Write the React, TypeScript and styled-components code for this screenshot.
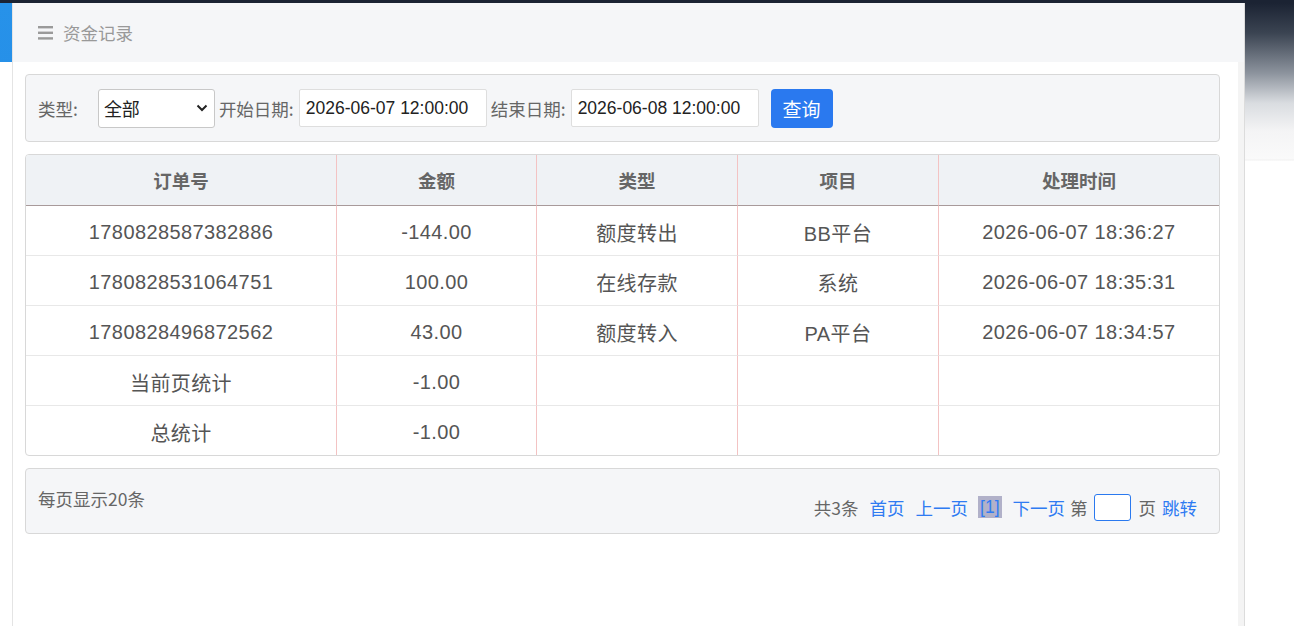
import React from 'react';
import styled, { createGlobalStyle } from 'styled-components';

const GlobalStyle = createGlobalStyle`
  html, body {
    margin: 0;
    padding: 0;
    background: #fff;
  }
  body {
    font-family: "Liberation Sans", "Noto Sans CJK SC", sans-serif;
  }
`;

const colors = {
  label: '#666',
  text: '#555',
  muted: '#999',
  panelBg: '#f5f6f8',
  boxBorder: '#d8d8d8',
  blue: '#2a79ef',
  pink: '#f3c3c3',
};

const Page = styled.div`
  display: grid;
  grid-template-columns: 12px 1233px 1fr;
  height: 626px;
  padding-top: 3px;
  box-sizing: border-box;
  background: linear-gradient(#1b2333, #1b2333) top / 100% 3px no-repeat, #fff;
`;

const LeftRail = styled.div`
  background: linear-gradient(#fff, #fff) 0 59px / 100% 100% no-repeat,
    linear-gradient(180deg, #2792e9, #1e7fe0);
`;

const Backdrop = styled.div`
  background: linear-gradient(
    180deg,
    #1b2333 0px,
    #3b4452 30px,
    #8c939d 70px,
    #d9dce0 100px,
    #f4f4f5 128px,
    #fafafa 156px,
    #f0f0f0 157px,
    #fff 158px
  );
`;

const Panel = styled.div`
  display: flex;
  flex-direction: column;
  border-left: 1px solid #e4e4e4;
  border-right: 1px solid #dcdcdc;
  background: #fff;
`;

const Header = styled.div`
  display: flex;
  align-items: center;
  gap: 9px;
  height: 59px;
  padding-left: 25px;
  background: ${colors.panelBg};
  color: ${colors.muted};
  font-size: 17.5px;
  font-family: "Noto Sans CJK SC", sans-serif;
`;

const Body = styled.div`
  flex: 1;
  padding: 12px 18px 0 12px;
  border-right: 6px solid #f4f4f4;
`;

const Box = styled.div`
  background: ${colors.panelBg};
  border: 1px solid ${colors.boxBorder};
  border-radius: 4px;
`;

const FilterBar = styled(Box)`
  display: flex;
  align-items: center;
  height: 66px;
  padding: 0 12px;
  font-size: 17.5px;
  color: ${colors.label};
`;

const Label = styled.span<{ $gap?: number }>`
  font-family: "Noto Sans CJK SC", sans-serif;
  font-size: 17.5px;
  margin: 0 ${(p) => p.$gap ?? 5}px 0 4px;
  &:first-child {
    margin-left: 0;
  }
`;

const Select = styled.div`
  display: flex;
  align-items: center;
  justify-content: space-between;
  box-sizing: border-box;
  width: 117px;
  height: 39px;
  padding: 0 6px 0 5px;
  background: #fff;
  border: 1px solid #c8c8c8;
  border-radius: 3px;
  color: #222;
  font-size: 18px;
  font-family: "Noto Sans CJK SC", sans-serif;
`;

const DateInput = styled.div`
  display: flex;
  align-items: center;
  box-sizing: border-box;
  width: 188px;
  height: 38px;
  padding-left: 6px;
  background: #fff;
  border: 1px solid #dedede;
  border-radius: 2px;
  color: #222;
  font-family: "Liberation Sans", Arial, sans-serif;
`;

const QueryButton = styled.button`
  margin-left: 12px;
  width: 62px;
  height: 39px;
  border: none;
  border-radius: 4px;
  background: ${colors.blue};
  color: #fff;
  font-size: 19px;
  font-family: "Noto Sans CJK SC", sans-serif;
  cursor: pointer;
`;

const TableWrap = styled.div`
  margin-top: 12px;
  border: 1px solid ${colors.boxBorder};
  border-radius: 4px;
  overflow: hidden;
`;

const Table = styled.table`
  width: 100%;
  border-collapse: separate;
  border-spacing: 0;
  table-layout: fixed;
  font-size: 20px;
  letter-spacing: 0.4px;
  color: ${colors.text};
`;

const Th = styled.th`
  height: 51px;
  box-sizing: border-box;
  padding: 0;
  background: #eff2f5;
  color: ${colors.label};
  font-size: 18.5px;
  font-weight: bold;
  letter-spacing: 0;
  font-family: "Noto Sans CJK SC", sans-serif;
  border-bottom: 1px solid #a89a9a;
  border-right: 1px solid ${colors.pink};
  &:last-child {
    border-right: none;
  }
`;

const Td = styled.td`
  height: 50px;
  padding: 3px 0 0;
  box-sizing: border-box;
  text-align: center;
  border-top: 1px solid #e8e8e8;
  border-right: 1px solid ${colors.pink};
  &:last-child {
    border-right: none;
  }
`;

const BodyRow = styled.tr`
  &:first-child td {
    border-top: none;
    height: 49px;
  }
`;

const Pager = styled(Box)`
  display: flex;
  justify-content: space-between;
  align-items: flex-start;
  margin-top: 12px;
  height: 64px;
  padding: 0 22px 0 12px;
  font-size: 17.5px;
  color: ${colors.label};
  font-family: "Noto Sans CJK SC", sans-serif;
`;

const PageSize = styled.span`
  margin-top: 17px;
`;

const PagerNav = styled.div`
  display: flex;
  align-items: center;
  margin-top: 25px;
  height: 26px;
`;

const PagerLink = styled.a<{ $ml?: number }>`
  color: #2f7bf2;
  text-decoration: none;
  margin-left: ${(p) => p.$ml ?? 11}px;
  cursor: pointer;
`;

const PagerText = styled.span<{ $ml?: number }>`
  margin-left: ${(p) => p.$ml ?? 0}px;
`;

const Current = styled.span`
  margin-left: 10px;
  padding: 0 2px;
  height: 22px;
  line-height: 22px;
  background: #b1b1c9;
  color: #2f7bf2;
  font-family: "Liberation Sans", sans-serif;
`;

const JumpInput = styled.div`
  box-sizing: border-box;
  width: 37px;
  height: 27px;
  margin: 0 8px 0 6px;
  background: #fff;
  border: 1px solid #2a79ef;
  border-radius: 3px;
`;

const MenuIcon = () => (
  <svg width="16" height="15" viewBox="0 0 16 15">
    <rect x="0" y="1" width="15" height="2.4" fill="#9a9a9a" />
    <rect x="0" y="6.6" width="15" height="2.4" fill="#9a9a9a" />
    <rect x="0" y="12.2" width="15" height="2.4" fill="#9a9a9a" />
  </svg>
);

const Chevron = () => (
  <svg width="12" height="8" viewBox="0 0 12 8">
    <path d="M1.5 1.5 L6 6 L10.5 1.5" fill="none" stroke="#222" strokeWidth="2" />
  </svg>
);

const rows = [
  ['1780828587382886', '-144.00', '额度转出', 'BB平台', '2026-06-07 18:36:27'],
  ['1780828531064751', '100.00', '在线存款', '系统', '2026-06-07 18:35:31'],
  ['1780828496872562', '43.00', '额度转入', 'PA平台', '2026-06-07 18:34:57'],
  ['当前页统计', '-1.00', '', '', ''],
  ['总统计', '-1.00', '', '', ''],
];

const columns = [
  { title: '订单号', width: 311 },
  { title: '金额', width: 200 },
  { title: '类型', width: 201 },
  { title: '项目', width: 201 },
  { title: '处理时间' },
];

export default function App() {
  return (
    <>
      <GlobalStyle />
      <Page>
        <LeftRail />
        <Panel>
          <Header>
            <MenuIcon />
            <span>资金记录</span>
          </Header>
          <Body>
            <FilterBar>
              <Label $gap={20}>类型:</Label>
              <Select>
                <span>全部</span>
                <Chevron />
              </Select>
              <Label>开始日期:</Label>
              <DateInput>2026-06-07 12:00:00</DateInput>
              <Label>结束日期:</Label>
              <DateInput>2026-06-08 12:00:00</DateInput>
              <QueryButton>查询</QueryButton>
            </FilterBar>

            <TableWrap>
              <Table>
                <colgroup>
                  {columns.map((c) => (
                    <col key={c.title} style={c.width ? { width: c.width } : undefined} />
                  ))}
                </colgroup>
                <thead>
                  <tr>
                    {columns.map((c) => (
                      <Th key={c.title}>{c.title}</Th>
                    ))}
                  </tr>
                </thead>
                <tbody>
                  {rows.map((r, i) => (
                    <BodyRow key={i}>
                      {r.map((cell, j) => (
                        <Td key={j}>{cell}</Td>
                      ))}
                    </BodyRow>
                  ))}
                </tbody>
              </Table>
            </TableWrap>

            <Pager>
              <PageSize>每页显示20条</PageSize>
              <PagerNav>
                <PagerText>共3条</PagerText>
                <PagerLink>首页</PagerLink>
                <PagerLink>上一页</PagerLink>
                <Current>[1]</Current>
                <PagerLink>下一页</PagerLink>
                <PagerText $ml={5}>第</PagerText>
                <JumpInput />
                <PagerText>页</PagerText>
                <PagerLink $ml={6}>跳转</PagerLink>
              </PagerNav>
            </Pager>
          </Body>
        </Panel>
        <Backdrop />
      </Page>
    </>
  );
}
